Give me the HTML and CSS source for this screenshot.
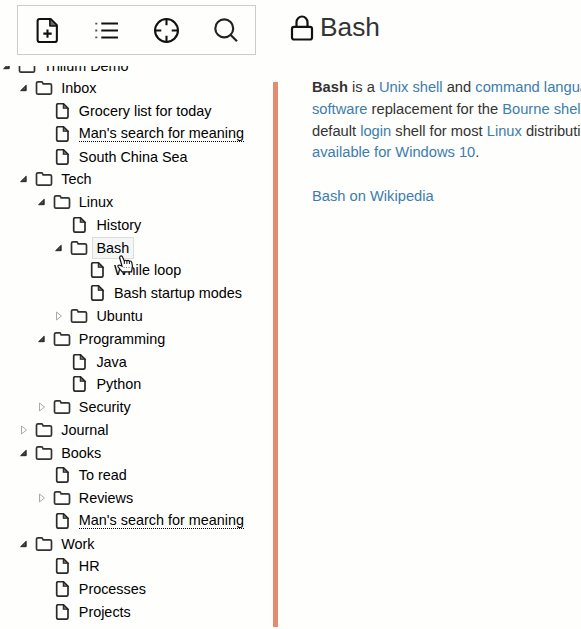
FILE: index.html
```html
<!DOCTYPE html>
<html lang="en">
<head>
<meta charset="utf-8">
<title>Trilium Notes</title>
<link rel="stylesheet" href="styles.css">
</head>
<body>
<svg class="defs" aria-hidden="true">
  <symbol id="open" viewBox="0 0 8 8"><path d="M.6 6.7 6.2 1.2V6.7Z" fill="#333" stroke="#222" stroke-width=".9" stroke-linejoin="round"/><path d="m3.8 5.2 1-1" stroke="#999" stroke-width=".6"/></symbol>
  <symbol id="closed" viewBox="0 0 8 10"><path d="M1.5 1 6.5 5 1.5 9Z" fill="#fff" stroke="#aaa"/></symbol>
  <symbol id="folder" viewBox="0 0 18 16"><path d="M3 1.8H6.5Q7.3 1.8 7.6 2.6L8.1 3.8H15Q16.5 3.8 16.5 5.3V12.7Q16.5 14.2 15 14.2H3Q1.5 14.2 1.5 12.7V3.3Q1.5 1.8 3 1.8Z" fill="none" stroke="#333" stroke-width="1.7"/></symbol>
  <symbol id="file" viewBox="0 0 18 16"><path d="M5.2.7H10.3L15 5.3V13.6Q15 15.2 13.4 15.2H5.2Q3.7 15.2 3.7 13.6V2.3Q3.7.7 5.2.7Z" fill="none" stroke="#2a2a2a" stroke-width="1.7"/><path d="M10.3.7V5.3H15Z" fill="#777" stroke="#222" stroke-width="1.1"/></symbol>
</svg>
<div class="app">
  <aside class="sidebar">
    <nav class="toolbar">
      <svg class="tool" viewBox="0 0 24 24"><path d="M4.5 1H15L21 7V21Q21 23 19 23H4.5Q2.5 23 2.5 21V3Q2.5 1 4.5 1ZM14.5 1V7.5H21M12 11V19M8 15H16"/><path class="fold" d="M15 2 20 7H15Z"/></svg>
      <svg class="tool" viewBox="0 0 24 24"><path d="M7 5.3H23M7 12H23M7 18.7H23"/><path class="dots" d="M1.2 5.3H3.2M1.2 12H3.2M1.2 18.7H3.2"/></svg>
      <svg class="tool" viewBox="0 0 24 24"><circle cx="12" cy="12" r="11"/><path d="M12 1V7M12 17V23M1 12H7M17 12H23"/></svg>
      <svg class="tool" viewBox="0 0 24 24"><g class="lens"><circle cx="10.8" cy="10" r="8.6"/><path d="m17 16.3 6 6"/></g></svg>
    </nav>
    <div class="tree">
      <ul class="root">
        <li><div class="row"><svg class="exp"><use href="#open"/></svg><svg class="icon"><use href="#folder"/></svg><span class="label">Trilium Demo</span></div>
          <ul>
            <li><div class="row"><svg class="exp"><use href="#open"/></svg><svg class="icon"><use href="#folder"/></svg><span class="label">Inbox</span></div>
              <ul>
                <li><div class="row"><svg class="exp"></svg><svg class="icon"><use href="#file"/></svg><span class="label">Grocery list for today</span></div></li>
                <li><div class="row"><svg class="exp"></svg><svg class="icon"><use href="#file"/></svg><span class="label clone">Man's search for meaning</span></div></li>
                <li><div class="row"><svg class="exp"></svg><svg class="icon"><use href="#file"/></svg><span class="label">South China Sea</span></div></li>
              </ul></li>
            <li><div class="row"><svg class="exp"><use href="#open"/></svg><svg class="icon"><use href="#folder"/></svg><span class="label">Tech</span></div>
              <ul>
                <li><div class="row"><svg class="exp"><use href="#open"/></svg><svg class="icon"><use href="#folder"/></svg><span class="label">Linux</span></div>
                  <ul>
                    <li><div class="row"><svg class="exp"></svg><svg class="icon"><use href="#file"/></svg><span class="label">History</span></div></li>
                    <li><div class="row"><svg class="exp"><use href="#open"/></svg><svg class="icon"><use href="#folder"/></svg><span class="label active">Bash</span></div>
                      <ul>
                        <li><div class="row"><svg class="exp"></svg><svg class="icon"><use href="#file"/></svg><span class="label">While loop</span></div></li>
                        <li><div class="row"><svg class="exp"></svg><svg class="icon"><use href="#file"/></svg><span class="label">Bash startup modes</span></div></li>
                      </ul></li>
                    <li><div class="row"><svg class="exp"><use href="#closed"/></svg><svg class="icon"><use href="#folder"/></svg><span class="label">Ubuntu</span></div></li>
                  </ul></li>
                <li><div class="row"><svg class="exp"><use href="#open"/></svg><svg class="icon"><use href="#folder"/></svg><span class="label">Programming</span></div>
                  <ul>
                    <li><div class="row"><svg class="exp"></svg><svg class="icon"><use href="#file"/></svg><span class="label">Java</span></div></li>
                    <li><div class="row"><svg class="exp"></svg><svg class="icon"><use href="#file"/></svg><span class="label">Python</span></div></li>
                  </ul></li>
                <li><div class="row"><svg class="exp"><use href="#closed"/></svg><svg class="icon"><use href="#folder"/></svg><span class="label">Security</span></div></li>
              </ul></li>
            <li><div class="row"><svg class="exp"><use href="#closed"/></svg><svg class="icon"><use href="#folder"/></svg><span class="label">Journal</span></div></li>
            <li><div class="row"><svg class="exp"><use href="#open"/></svg><svg class="icon"><use href="#folder"/></svg><span class="label">Books</span></div>
              <ul>
                <li><div class="row"><svg class="exp"></svg><svg class="icon"><use href="#file"/></svg><span class="label">To read</span></div></li>
                <li><div class="row"><svg class="exp"><use href="#closed"/></svg><svg class="icon"><use href="#folder"/></svg><span class="label">Reviews</span></div></li>
                <li><div class="row"><svg class="exp"></svg><svg class="icon"><use href="#file"/></svg><span class="label clone">Man's search for meaning</span></div></li>
              </ul></li>
            <li><div class="row"><svg class="exp"><use href="#open"/></svg><svg class="icon"><use href="#folder"/></svg><span class="label">Work</span></div>
              <ul>
                <li><div class="row"><svg class="exp"></svg><svg class="icon"><use href="#file"/></svg><span class="label">HR</span></div></li>
                <li><div class="row"><svg class="exp"></svg><svg class="icon"><use href="#file"/></svg><span class="label">Processes</span></div></li>
                <li><div class="row"><svg class="exp"></svg><svg class="icon"><use href="#file"/></svg><span class="label">Projects</span></div></li>
              </ul></li>
          </ul></li>
      </ul>
    </div>
  </aside>
  <main class="note">
    <header class="title">
      <svg class="lock" viewBox="0 0 24 26"><rect x="2" y="11.8" width="20" height="12.7" rx="2"/><path d="M6.5 11.8V7.3a5.5 5.8 0 0 1 11 0V11.8"/></svg>
      <h1>Bash</h1>
    </header>
    <div class="body">
      <div class="content">
        <p><b>Bash</b> is a <a>Unix shell</a> and <a>command language</a><br><a>software</a> replacement for the <a>Bourne shell</a><br>default <a>login</a> shell for most <a>Linux</a> distributions<br><a>available for Windows 10</a>.</p>
        <p><a>Bash on Wikipedia</a></p>
      </div>
    </div>
  </main>
</div>
<svg class="cursor" viewBox="0 0 17 18"><path d="M3.2 1.3Q4.4.3 5.3 1.6L7.3 6Q8.6 4.6 9.8 5.8 11.3 4.8 12.3 6.2 14.3 5.5 14.8 7.5L15.4 11 14.6 16.8H5.2L1 11.8Q.6 10 2.5 10L5 11.2 2.7 3Q2.5 2 3.2 1.3Z" fill="#fff" stroke="#111" stroke-width="1.2"/><path d="M7.3 6V9M9.9 6V9M12.4 6.5V9" stroke="#111"/><path d="M6.5 12.5H13.5" stroke="#777" stroke-dasharray="1 1.5"/></svg>
</body>
</html>
```

FILE: styles.css
```css
* { box-sizing: border-box; }
body {
  margin: 0;
  background: #fefefc;
  color: #333;
  font-family: "Liberation Sans", Arial, sans-serif;
  overflow: hidden;
}
.defs { display: none; }
.app { display: flex; height: 629px; overflow: hidden; }
.sidebar { width: 273px; flex: none; padding-top: 5px; }
.toolbar {
  display: flex;
  align-items: center;
  justify-content: space-between;
  width: 239px;
  height: 50px;
  margin-left: 17px;
  padding: 0 17px;
  border: 1px solid #ccc;
}
.tool {
  width: 25px;
  height: 25px;
  fill: none;
  stroke: #111;
  stroke-width: 2;
  stroke-linejoin: round;
}
.tool .dots { stroke: #555; stroke-width: 1.7; }
.tool .fold { fill: #666; stroke: none; }
.tool .lens { stroke: #222; stroke-width: 2.1; }
.tree { height: 563px; margin-top: 11px; overflow: hidden; }
ul { list-style: none; margin: 0; padding: 0 0 0 17.6px; }
.root { padding: 0; margin-top: -11.8px; }
.row { display: flex; align-items: center; height: 22.78px; }
.exp { flex: none; width: 8px; height: 8px; margin-left: 2.6px; }
.exp:has([href="#closed"]) { height: 10px; }
.icon { flex: none; width: 18px; height: 16px; margin: 0 4px 0 7px; }
.label {
  padding: 0 3px;
  border: 1px solid transparent;
  color: #000;
  font-size: 14.4px;
  line-height: 20px;
  white-space: nowrap;
}
.clone {
  padding: 0;
  margin-left: 4px;
  border: 0;
  border-bottom: 1px dotted #000;
  line-height: 16px;
}
.active { background: #f5f7f6; border-color: #ddd; padding-right: 4px; }
.note { flex: 1; min-width: 0; display: flex; flex-direction: column; }
.title { display: flex; align-items: center; height: 54px; padding-left: 17px; }
.lock { width: 24px; height: 26px; margin-top: 1px; fill: none; stroke: #111; stroke-width: 2.2; }
h1 { margin: 0 0 0 6px; font-size: 26.3px; font-weight: 400; line-height: 30px; }
.body {
  height: 545px;
  margin-top: 28px;
  padding: 0 0 0 34px;
  border-left: 5px solid #e58b70;
}
.content {
  margin-top: -5px;
  font-size: 14.7px;
  line-height: 21.8px;
  white-space: nowrap;
}
p { margin: 0 0 22px; }
a { color: #3c7dad; }
.cursor { position: absolute; left: 117px; top: 255px; width: 17px; height: 18px; }
```
